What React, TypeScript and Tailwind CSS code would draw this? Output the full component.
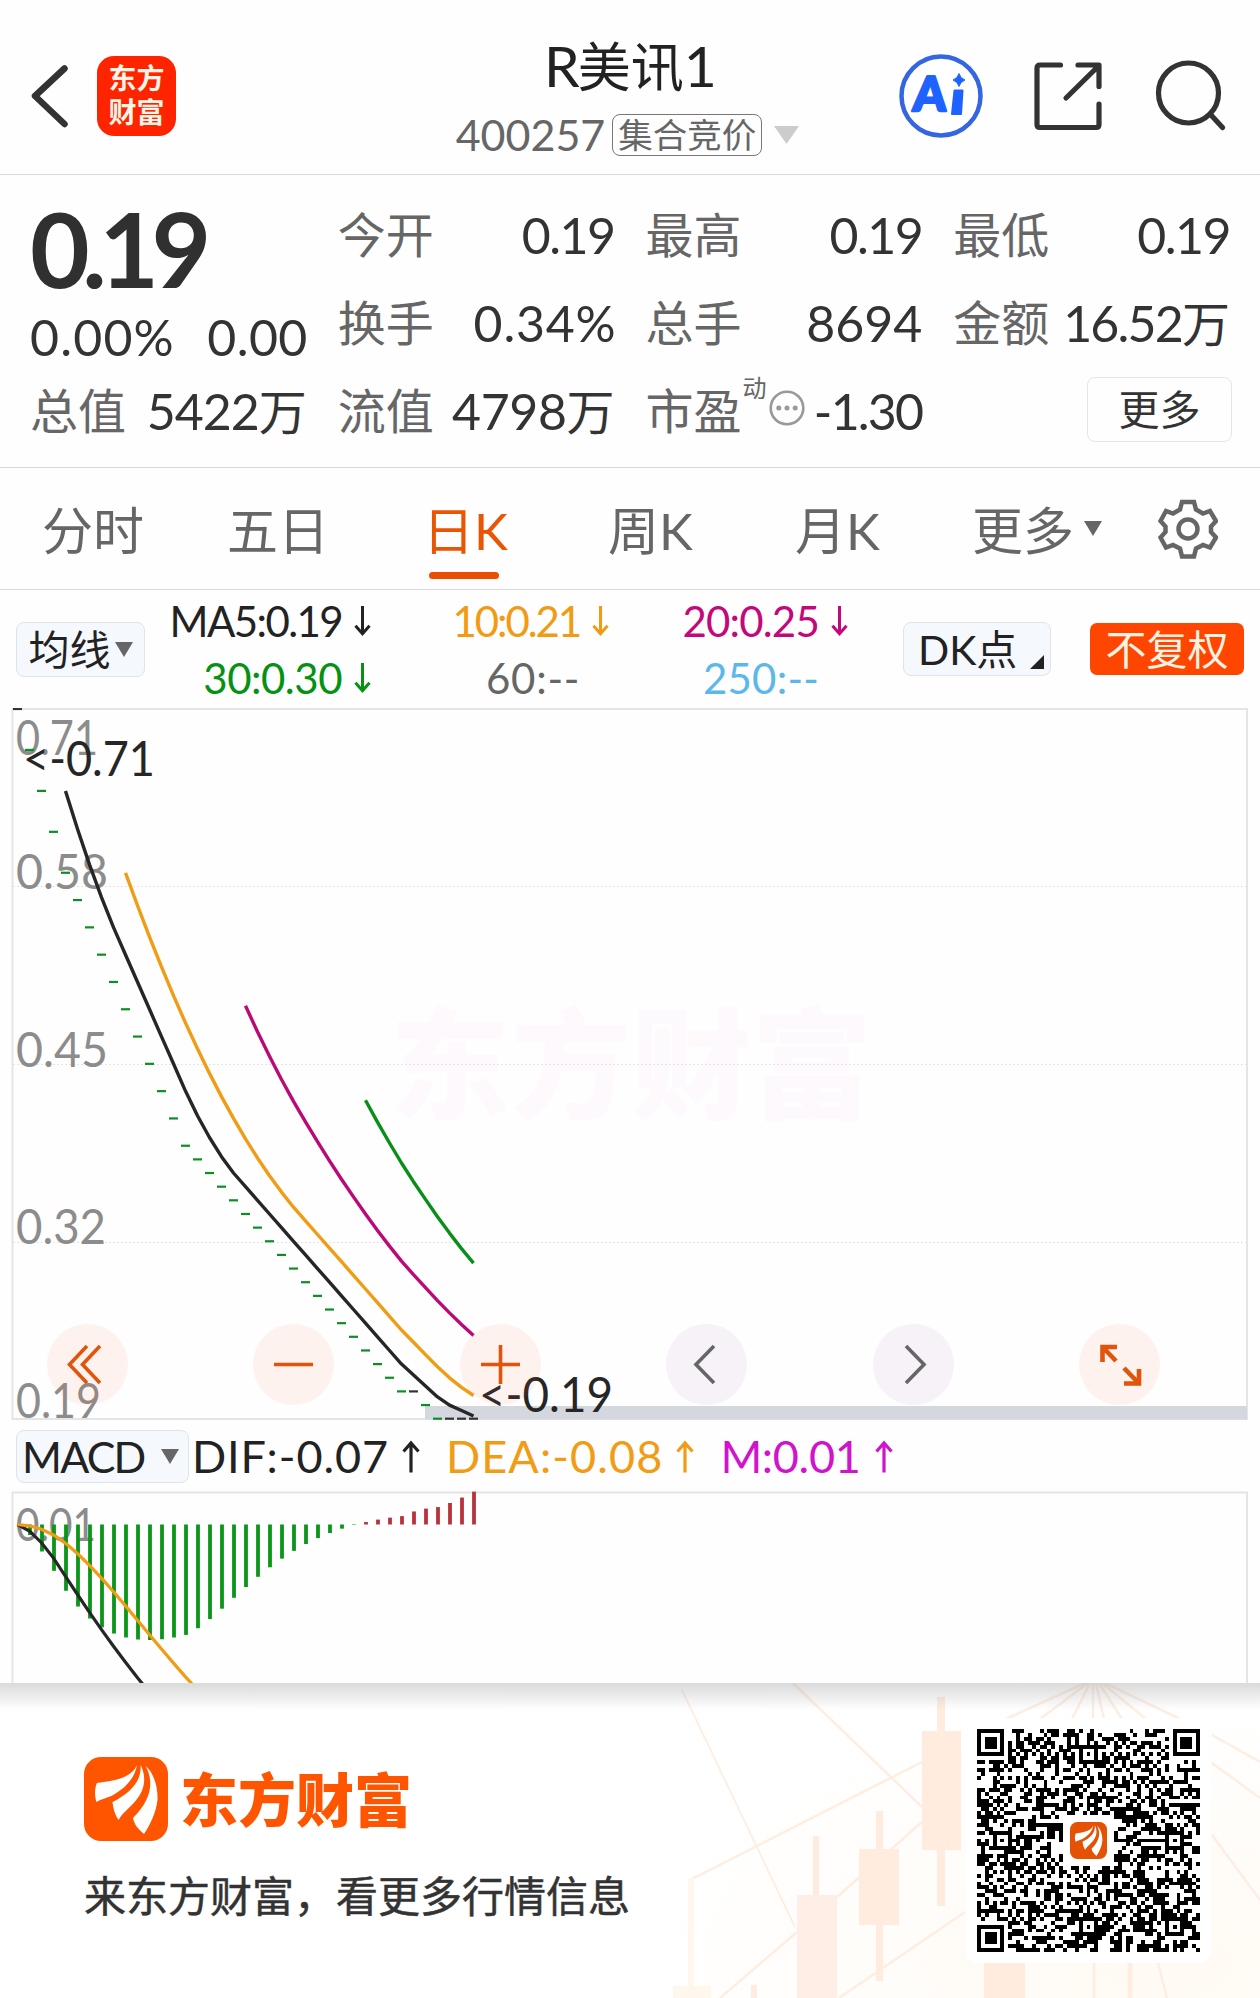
import type { ReactNode } from "react";

const FONT = "font-['Lato','Noto_Sans_CJK_SC',sans-serif]";

/* ---------- price data ---------- */
const closes: number[] = [0.71, 0.68, 0.65, 0.62, 0.59, 0.57, 0.55, 0.53, 0.51, 0.49, 0.47, 0.45, 0.43, 0.41, 0.39];
for (let p = 38; p >= 21; p--) closes.push(p / 100);
closes.push(0.21, 0.2, 0.19, 0.19, 0.19, 0.19);

const px = (i: number) => 17.5 + 12 * i;
const py = (v: number) => 1 + ((0.71 - v) / 0.52) * 709.7;

function average(n: number) {
  const pts: string[] = [];
  for (let i = n - 1; i < closes.length; i++) {
    const m = closes.slice(i - n + 1, i + 1).reduce((a, b) => a + b, 0) / n;
    pts.push(`${px(i)},${py(m).toFixed(1)}`);
  }
  return pts.join(" ");
}

function macd() {
  let e12 = closes[0];
  let e26 = closes[0];
  let dea = 0;
  return closes.map((c) => {
    e12 += (c - e12) * (2 / 13);
    e26 += (c - e26) * (2 / 27);
    const dif = e12 - e26;
    dea += (dif - dea) * 0.2;
    return { dif, dea, bar: 2 * (dif - dea) };
  });
}
const macdRows = macd();
const macdScale = 115.5 / Math.abs(Math.min(...macdRows.map((m) => m.bar)));
const my = (v: number) => 33.5 - v * macdScale;

/* ---------- QR pattern ---------- */
const N = 57;
function qrPath() {
  let s = 20240257;
  const rnd = () => {
    s = (s * 48271) % 2147483647;
    return (s >> 9) & 1;
  };
  const g = Array.from({ length: N }, () => Array.from({ length: N }, () => rnd()));
  const square = (cx: number, cy: number, r: number, ring: number[]) => {
    for (let y = -r; y <= r; y++)
      for (let x = -r; x <= r; x++) {
        const yy = cy + y;
        const xx = cx + x;
        if (yy < 0 || xx < 0 || yy >= N || xx >= N) continue;
        g[yy][xx] = ring[Math.max(Math.abs(x), Math.abs(y))];
      }
  };
  for (let i = 8; i < N - 8; i++) g[6][i] = g[i][6] = i % 2 ? 0 : 1;
  [[3, 3], [53, 3], [3, 53]].forEach(([x, y]) => square(x, y, 4, [1, 1, 0, 1, 0]));
  [[28, 6], [6, 28], [50, 28], [28, 50], [50, 50]].forEach(([x, y]) => square(x, y, 2, [1, 0, 1]));
  for (let y = 22; y < 35; y++) for (let x = 22; x < 35; x++) g[y][x] = 0;
  let d = "";
  g.forEach((row, y) => {
    let x = 0;
    while (x < N) {
      if (!row[x]) {
        x++;
        continue;
      }
      let e = x;
      while (e < N && row[e]) e++;
      d += `M${x} ${y}h${e - x}v1h${x - e}z`;
      x = e;
    }
  });
  return d;
}
const qr = qrPath();

/* ---------- small drawings ---------- */
function Triangle({ className }: { className: string }) {
  return (
    <svg viewBox="0 0 20 16" preserveAspectRatio="none" className={className}>
      <path d="M0 0H20L10 16z" fill="currentColor" />
    </svg>
  );
}

function Arrow({ up = false, className = "" }: { up?: boolean; className?: string }) {
  return (
    <svg viewBox="0 0 18 32" fill="none" stroke="currentColor" strokeWidth="3.200" className={className}>
      {up ? <path d="M9 32V2M1.500 11L9 2.500L16.500 11" /> : <path d="M9 0V30M1.500 21L9 29.500L16.500 21" />}
    </svg>
  );
}

function Swoosh({ className, bg }: { className: string; bg: string }) {
  return (
    <svg viewBox="0 0 84 84" className={className}>
      <rect width="84" height="84" rx="17" fill={bg} />
      <g fill="#fff">
        <path d="M53 8C48 20 33 23.500 13 26C10.500 31 10.500 39 12.500 45C17 42 24 41 30 37.500C43 30 51 20 53 8z" />
        <path d="M56.500 8C58 24 46 36.500 28.500 45C29 51 31 58 34.500 63C39 55 46 51 53 42C63 29 61 16 56.500 8z" />
        <path d="M61.500 9C70 24 68 42 49 61C50 67 54 72 60 77C66 68 72 56 73.500 43C74 30 70 16 61.500 9z" />
      </g>
    </svg>
  );
}

function Num({ className = "", children }: { className?: string; children: ReactNode }) {
  return <span className={`text-[50px] ${className}`}>{children}</span>;
}

function Stat({ label, children }: { label: string; children: ReactNode }) {
  return (
    <div className="flex h-[88px] items-center justify-between whitespace-nowrap">
      <span className="text-[#666]">{label}</span>
      <span>{children}</span>
    </div>
  );
}

function Header() {
  return (
    <header className="flex h-[175px] items-start border-b-[1.500px] border-[#d9d9d9] pl-[30px] pr-[33px]">
      <svg viewBox="0 0 42 70" className="mt-[61px] h-[70px] w-[42px]" fill="none" stroke="#333" strokeWidth="6.500" strokeLinecap="round" strokeLinejoin="round">
        <path d="M34.500 7.500L5 35L34.500 63" />
      </svg>
      <div className="ml-[25px] mt-[56px] flex h-[80px] w-[79px] flex-col items-center justify-center rounded-[17px] bg-[#ff2400] pb-[2px] text-[28px] font-bold leading-[34px] text-[#fff5e6]">
        <span>东方</span>
        <span>财富</span>
      </div>
      <div className="ml-[267px] flex w-[370px] flex-col items-center">
        <h1 className="mt-[32px] whitespace-nowrap pl-[5px] text-[53px] leading-[66px] text-[#222]">
          <span className="text-[57px] tracking-[-2px]">R</span>美讯<span className="text-[57px]">1</span>
        </h1>
        <div className="mt-[14px] flex h-[42px] items-center text-[#666]">
          <span className="-ml-[1px] text-[43px] leading-[42px]">400257</span>
          <span className="ml-[7px] flex h-[42px] w-[150px] items-center justify-center rounded-[8px] border border-[#777] text-[34.500px] leading-none">集合竞价</span>
          <Triangle className="ml-[12px] h-[18px] w-[25px] text-[#ccc]" />
        </div>
      </div>
      <div className="ml-auto flex items-center">
        <svg viewBox="0 0 84 84" className="mt-[54px] h-[84px] w-[84px]">
          <circle cx="42" cy="42" r="39.500" fill="#fff" stroke="#3566e2" strokeWidth="4.500" />
          <text x="14" y="57" fontSize="48" fontWeight="900" fill="#1e62ff" stroke="#1e62ff" strokeWidth="2.500" strokeLinejoin="round" textLength="33" lengthAdjust="spacingAndGlyphs" transform="skewX(-3) translate(2.500 0)">A</text>
          <path d="M55.500 36.500h8l-1.500 23.500h-9z" fill="#1e62ff" stroke="#1e62ff" strokeWidth="2" strokeLinejoin="round" />
          <path d="M60 19.500q1.500 5 6 6.500q-4.500 1.500-6 6.500q-1.500-5-6-6.500q4.500-1.500 6-6.500z" fill="#1e62ff" stroke="#1e62ff" />
        </svg>
        <svg viewBox="0 0 70 70" className="ml-[50px] mt-[53px] h-[70px] w-[70px]" fill="none" stroke="#333" strokeWidth="5.200" strokeLinecap="round" strokeLinejoin="round">
          <path d="M27.500 4H7Q4 4 4 7V63.500Q4 66.500 7 66.500H63Q66 66.500 66 63.500V43M45 4H66V25.500M33 37L65 5.500" />
        </svg>
        <svg viewBox="0 0 74 74" className="ml-[50px] mt-[52px] h-[74px] w-[74px]" fill="none" stroke="#333" strokeWidth="5.200" strokeLinecap="round">
          <circle cx="35.500" cy="35" r="30" />
          <path d="M58 57L69.500 69.500" />
        </svg>
      </div>
    </header>
  );
}

function Quote() {
  return (
    <section className="grid h-[293px] grid-cols-4 gap-x-[31px] border-b-[1.500px] border-[#d9d9d9] px-[30px] pt-[16px] text-[48px] leading-none text-[#333]">
      <div className="flex flex-col">
        <div className="flex h-[120px] items-center pb-[6px] text-[103px] font-bold tracking-[-7.500px] text-[#303030]">0.19</div>
        <div className="-mr-[1px] -mt-[2px] mb-[2px] flex h-[56px] items-center justify-between">
          <Num className="tracking-[1.200px]">0.00%</Num>
          <Num className="tracking-[0.400px]">0.00</Num>
        </div>
        <Stat label="总值"><Num className="tracking-[-1px]">5422</Num>万</Stat>
      </div>
      <div className="flex flex-col">
        <Stat label="今开"><Num className="tracking-[-1.500px]">0.19</Num></Stat>
        <Stat label="换手"><Num className="-mr-[2px] tracking-[0.800px]">0.34%</Num></Stat>
        <Stat label="流值"><Num className="tracking-[-0.400px]">4798</Num>万</Stat>
      </div>
      <div className="flex flex-col">
        <Stat label="最高"><Num className="tracking-[-1.500px]">0.19</Num></Stat>
        <Stat label="总手"><Num>8694</Num></Stat>
        <div className="flex h-[88px] items-center whitespace-nowrap">
          <span className="text-[#666]">市盈</span>
          <span className="mb-[46px] ml-[1px] text-[24px] text-[#666]">动</span>
          <svg viewBox="0 0 36 36" className="ml-[2px] mb-[6px] h-[36px] w-[36px]">
            <circle cx="18" cy="18" r="16.300" fill="none" stroke="#999" strokeWidth="2.600" />
            <g fill="#999">
              <circle cx="9.800" cy="18" r="2.500" />
              <circle cx="18" cy="18" r="2.500" />
              <circle cx="26.200" cy="18" r="2.500" />
            </g>
          </svg>
          <Num className="ml-auto tracking-[-1.800px]">-1.30</Num>
        </div>
      </div>
      <div className="flex flex-col">
        <Stat label="最低"><Num className="tracking-[-1.500px]">0.19</Num></Stat>
        <Stat label="金额"><Num className="tracking-[-1.800px]">16.52</Num>万</Stat>
        <div className="flex h-[84px] items-center justify-end">
          <button className="-mr-[2px] flex h-[65px] w-[145px] items-center justify-center rounded-[8px] border-[1.500px] border-[#e6e6e6] text-[41px]">更多</button>
        </div>
      </div>
    </section>
  );
}

function Tabs() {
  return (
    <nav className="flex h-[122px] items-center border-b-[1.500px] border-[#d9d9d9] text-[51px] leading-none text-[#666]">
      <span className="ml-[42px] mt-[4px] w-[185px]">分时</span>
      <span className="mt-[4px] w-[196px]">五日</span>
      <span className="relative mt-[4px] w-[185px] text-[#ea5504]">
        日K
        <i className="absolute left-[6px] top-[67px] h-[7px] w-[70px] rounded-full bg-[#ea4e02]" />
      </span>
      <span className="mt-[4px] w-[187px]">周K</span>
      <span className="mt-[4px] w-[177px]">月K</span>
      <span className="mt-[4px]">更多</span>
      <Triangle className="ml-[10px] h-[15px] w-[18px]" />
      <svg viewBox="0 0 60 60" className="ml-[56px] h-[60px] w-[60px]" fill="none" stroke="#666" strokeWidth="4.500">
        <path d="M24 3H36L38 10.500L45 14.500L52 12L58 22L53 27.500V33L58 38.500L52 48.500L45 46L38 49.500L36 57.500H24L22 49.500L15 46L8 48.500L2.500 38.500L7.500 33V27.500L2.500 22L8 12L15 14.500L22 10.500z" />
        <circle cx="30" cy="30" r="9.500" />
      </svg>
    </nav>
  );
}

function Ma({ children, arrow = true, className }: { children: ReactNode; arrow?: boolean; className: string }) {
  return (
    <div className={`flex h-[57px] items-center justify-end whitespace-nowrap ${className}`}>
      <span>{children}</span>
      {arrow ? <Arrow className="ml-[12px] h-[30px] w-[17px]" /> : <span className="ml-[12px] w-[17px]" />}
    </div>
  );
}

function Averages() {
  return (
    <section className="flex h-[118px] items-center pl-[16px] pr-[16px] text-[41px] leading-none text-[#222]">
      <div className="flex h-[55px] w-[129px] items-center justify-center rounded-[8px] border-[1.500px] border-[#dfe3ea] bg-[#f5f9fe]">
        均线
        <Triangle className="ml-[4px] h-[15px] w-[18px] text-[#666]" />
      </div>
      <div className="grid w-[703px] grid-cols-[226px_238px_239px] text-[42px]">
        <Ma className="tracking-[-1.600px] text-[#222]">MA5:0.19</Ma>
        <Ma className="tracking-[-2.100px] text-[#f39a13]">10:0.21</Ma>
        <Ma className="tracking-[-0.800px] text-[#c4087c]">20:0.25</Ma>
        <Ma className="tracking-[-0.500px] text-[#059212]">30:0.30</Ma>
        <Ma arrow={false} className="tracking-[0.700px] text-[#666]">60:--</Ma>
        <Ma arrow={false} className="tracking-[0.200px] text-[#5db8ea]">250:--</Ma>
      </div>
      <div className="ml-[55px] flex h-[54px] w-[148px] items-center rounded-[8px] border-[1.500px] border-[#dfe3ea] bg-[#f5f9fe] pl-[14px]">
        DK点
        <svg viewBox="0 0 14 14" className="ml-auto mr-[6px] mt-[26px] h-[14px] w-[14px]">
          <path d="M14 0V14H0z" fill="#222" />
        </svg>
      </div>
      <div className="ml-auto flex h-[52px] w-[154px] items-center justify-center rounded-[7px] bg-[#ff4600] text-[#fff3e4]">不复权</div>
    </section>
  );
}

function RoundButton({ gray = false, children }: { gray?: boolean; children: ReactNode }) {
  return (
    <button className={`flex size-[81px] items-center justify-center rounded-full ${gray ? "bg-[#f0e9f2]/60 text-[#666]" : "bg-[#ff6a3c]/[0.08] text-[#e2540b]"}`}>
      <svg viewBox="0 0 81 81" className="size-[81px]" fill="none" stroke="currentColor" strokeWidth="3.600">
        {children}
      </svg>
    </button>
  );
}

function PriceChart() {
  const labels: [string, number, number][] = [
    ["0.71", 46.5, 81],
    ["0.58", 181, 91],
    ["0.45", 359, 91],
    ["0.32", 536, 89],
    ["0.19", 709.5, 84],
  ];
  return (
    <section className="relative h-[712px]">
      <svg viewBox="0 0 1260 712" className="h-[712px] w-[1260px]" fill="none">
        <rect x="12.500" y="1" width="1234.500" height="710" stroke="#e3e3e3" strokeWidth="1.800" />
        <text x="390" y="402" fontSize="120" fontWeight="900" fill="#fdf9fc" textLength="482">东方财富</text>
        <g stroke="#e4e4e4" strokeDasharray="2 2">
          <path d="M13 178.500H1247M13 356.500H1247M13 534.500H1247" />
        </g>
        <rect x="425" y="698" width="822" height="13.500" fill="#d5d7df" />
        <g fontSize="48" fill="#8c8c8c">
          {labels.map(([t, y, w]) => (
            <text key={t} x="16" y={y} textLength={w + 1} lengthAdjust="spacingAndGlyphs">{t}</text>
          ))}
        </g>
        {closes.map((c, i) => {
          const flat = i === 0 || c === closes[i - 1];
          return <path key={i} d={`M${px(i) - 4.5} ${py(c)}h9`} stroke={flat ? "#333" : "#0b8f24"} strokeWidth="2.200" />;
        })}
        <g strokeWidth="3.400" strokeLinejoin="round">
          <polyline points={average(5)} stroke="#262626" />
          <polyline points={average(10)} stroke="#f09c14" />
          <polyline points={average(20)} stroke="#bb0a77" />
          <polyline points={average(30)} stroke="#088f18" />
        </g>
        <g fontSize="48" fill="#262626">
          <text x="23" y="68" textLength="132" lengthAdjust="spacingAndGlyphs">&lt;-0.71</text>
          <text x="479" y="703.500" textLength="134" lengthAdjust="spacingAndGlyphs">&lt;-0.19</text>
        </g>
      </svg>
      <div className="absolute left-[47px] top-[616px] flex w-[1113px] justify-between">
        <RoundButton><path d="M40 22L22.500 40.500L40 59M53 22L35.500 40.500L53 59" /></RoundButton>
        <RoundButton><path d="M21 40.500H60" /></RoundButton>
        <RoundButton><path d="M21 40.500H60M40.500 21V60" /></RoundButton>
        <RoundButton gray><path d="M48 22L30 40.500L48 59" /></RoundButton>
        <RoundButton gray><path d="M33 22L51 40.500L33 59" /></RoundButton>
        <RoundButton><path d="M23.500 38V23H38M23.500 23L37 37M45 59.500H60V45M60 59.500L45 44" strokeWidth="4.600" /></RoundButton>
      </div>
    </section>
  );
}

function MacdPanel() {
  const line = (k: "dif" | "dea") => macdRows.map((m, i) => `${px(i)},${my(m[k]).toFixed(1)}`).join(" ");
  return (
    <section>
      <div className="flex h-[71px] items-center whitespace-nowrap pl-[16px] pt-[2px] text-[45px] leading-none text-[#222]">
        <div className="flex h-[53px] w-[173px] items-center rounded-[8px] border-[1.500px] border-[#dfe3ea] bg-[#f5f9fe] pl-[5px] text-[43px] tracking-[-1.800px]">
          MACD
          <Triangle className="ml-auto mr-[9px] h-[15px] w-[18px] text-[#666]" />
        </div>
        <span className="ml-[3px] tracking-[0.900px]">DIF:-0.07</span>
        <Arrow up className="ml-[13px] h-[33px] w-[18px]" />
        <span className="ml-[26px] tracking-[1.100px] text-[#f09c14]">DEA:-0.08</span>
        <Arrow up className="ml-[13px] h-[33px] w-[18px] text-[#f09c14]" />
        <span className="ml-[26px] tracking-[-0.300px] text-[#cf14cc]">M:0.01</span>
        <Arrow up className="ml-[14px] h-[33px] w-[18px] text-[#cf14cc]" />
      </div>
      <svg viewBox="0 0 1260 192" className="block h-[192px] w-[1260px]" fill="none">
        <path d="M12.500 192V1.500H1247V192" stroke="#e3e3e3" strokeWidth="1.800" />
        <text x="16" y="49.500" fontSize="47" fill="#8c8c8c" textLength="80" lengthAdjust="spacingAndGlyphs">0.01</text>
        {macdRows.map((m, i) => (
          <path key={i} d={`M${px(i) + 0.5} 33.5V${my(m.bar)}`} stroke={m.bar > 0 ? "#b8323a" : "#0a9618"} strokeWidth="3.800" />
        ))}
        <polyline points={line("dif")} stroke="#262626" strokeWidth="3.200" />
        <polyline points={line("dea")} stroke="#f09c14" strokeWidth="3.200" />
      </svg>
    </section>
  );
}

function Footer() {
  return (
    <footer className="relative flex h-[315px] justify-between overflow-hidden bg-white pl-[84px] pr-[49px]">
      <svg viewBox="0 0 1260 315" className="absolute inset-0 h-[315px] w-[1260px]" fill="none">
        <defs>
          <radialGradient id="warm" cx="0.850" cy="0.900" r="0.850">
            <stop offset="0" stopColor="#fffaf3" />
            <stop offset="1" stopColor="#fffaf3" stopOpacity="0" />
          </radialGradient>
          <linearGradient id="shade" x1="0" y1="0" x2="0" y2="1">
            <stop offset="0" stopColor="#777c78" stopOpacity="0.280" />
            <stop offset="1" stopColor="#777c78" stopOpacity="0" />
          </linearGradient>
        </defs>
        <rect x="640" width="620" height="315" fill="url(#warm)" />
        <g stroke="#feeee2" strokeWidth="2.500">
          <path d="M793 0L922 124M690 197L922 79M837 214L922 139M720 315L797 249M839 315L965 229" />
          <path d="M682 7L795 244" strokeWidth="1.800" />
          <path d="M1085 0L1006 36M1088 0L1040 36M1090 0L1072 36M1093 0V36M1096 0L1104 36M1099 0L1122 36M1102 0L1146 36M1105 0L1180 36" />
          <path d="M1212 52L1260 79M1212 80L1260 115M1212 152L1260 217M1094 280V315M1158 280L1167 315" />
          <path d="M1130 280V315" strokeWidth="5" />
        </g>
        <g fill="#ffecdf">
          <path d="M937 14h8v209h-8zM922 48h39v119h-39zM876 128h7v170h-7zM859 166h40v76h-40zM813 153h6v60h-6zM984 280h41v35h-41zM751 302h6v13h-6z" />
          <path d="M797 212h40v103h-40z" fill="#ffeee6" />
          <path d="M688 195h6v108h-6zM673 303h38v12h-38z" fill="#fff7ee" />
        </g>
        <rect width="1260" height="27" fill="url(#shade)" />
      </svg>
      <div className="relative pt-[74px]">
        <div className="flex items-center">
          <Swoosh className="size-[84px]" bg="#ff5500" />
          <span className="ml-[12px] mt-[2px] whitespace-nowrap text-[58px] font-black leading-[82px] text-[#ff5500]">东方财富</span>
        </div>
        <p className="mt-[31px] whitespace-nowrap text-[42px] leading-[48px] text-[#333] [-webkit-text-stroke:0.5px_#333]">来东方财富，看更多行情信息</p>
      </div>
      <div className="relative mt-[35px] flex size-[245px] items-center justify-center rounded-[12px] bg-white">
        <svg viewBox="0 0 57 57" className="size-[223px]" shapeRendering="crispEdges">
          <path d={qr} fill="#000" />
        </svg>
        <Swoosh className="absolute left-[104px] top-[104px] size-[37px]" bg="#e35205" />
      </div>
    </footer>
  );
}

export default function App() {
  return (
    <main className={`h-[1998px] w-[1260px] overflow-hidden bg-[#fefefe] ${FONT}`}>
      <Header />
      <Quote />
      <Tabs />
      <Averages />
      <PriceChart />
      <MacdPanel />
      <Footer />
    </main>
  );
}
